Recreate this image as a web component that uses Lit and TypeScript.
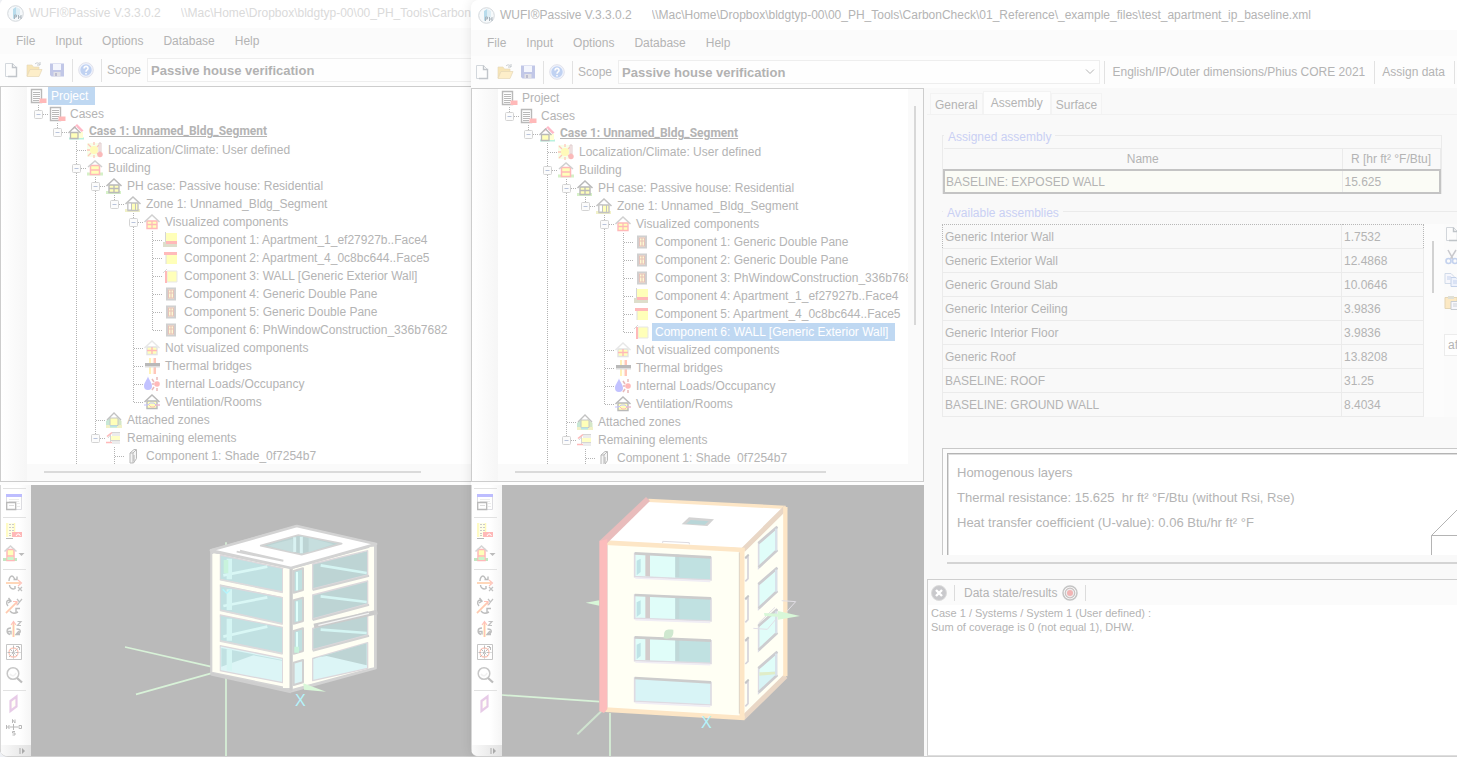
import { LitElement, html, svg, css, nothing } from "lit";
import { customElement, property } from "lit/decorators.js";
import { classMap } from "lit/directives/class-map.js";

type Guide = " " | "|" | "T" | "L";
interface TreeRow {
  guides: string;
  box?: boolean;
  icon: string;
  text: string;
  strong?: boolean;
  selected?: boolean;
}

const house = (stroke: string, roof: string, body: unknown, ground = "") => svg`
  ${ground ? svg`<rect x="0" y="13" width="15" height="3" fill=${ground} />` : nothing}
  <path d="M3 7h10v7.5H3z" fill="#ff0" stroke=${stroke} stroke-width="1.400" />
  <path d="M0.5 8L8 1l7.500 7" fill="none" stroke=${roof} stroke-width="1.5" />
  ${body}`;

const treeIcons: Record<string, unknown> = {
  list: svg`<path d="M1.500 1.500h10v13h-10z" fill="#fff" stroke="#000" stroke-width="1.400" />
    <path d="M3 4.500h7M3 6.500h7M3 8.500h7M3 10.500h7M3 12.500h6" stroke="#000" />
    <rect x="9.500" y="10.500" width="7" height="4.500" fill="#f00" />`,
  cases: svg`<rect x="1" y="13.500" width="15" height="2" fill="#0c8" />
    <path d="M10 8h5v6h-5z" fill="#ff6" />
    <path d="M5 5l4-4 6 6M9 2.500l5 5" fill="none" stroke="#f03" stroke-width="1.300" />
    <path d="M2.500 8.500h7.500v6H2.500z" fill="#ff0" stroke="#000" stroke-width="1.300" />
    <path d="M0.500 9L6.500 3l6 6" fill="none" stroke="#000" stroke-width="1.400" />`,
  climate: svg`<rect x="0" y="1" width="11" height="14" fill="#cf6" opacity="0.500" />
    <circle cx="7" cy="8" r="4" fill="#fe0" />
    <path d="M1 2l3 3M7 0v3M1 14l3-3M7 16v-3M0 8h3M12 3l-2 2M12 13l-2-2" stroke="#f30" stroke-width="1.300" />
    <path d="M12 1h2v9h-2z" fill="#fcc" stroke="#844" /><circle cx="13" cy="12.500" r="2.700" fill="#e00" />`,
  building: svg`<rect x="0" y="12.500" width="16" height="3" fill="#6c3" />
    <path d="M3.500 5.500h9v9h-9z" fill="#ff0" stroke="#f00" stroke-width="1.500" /><path d="M3 10h10" stroke="#f00" stroke-width="1.500" />
    <path d="M1 7l7-6 7 6" fill="none" stroke="#555" stroke-width="1.500" />`,
  ph: house("#000", "#000", svg`<path d="M8 7v7M3 10.500h10" stroke="#000" stroke-width="1.300" />`, "#6c3"),
  zone: house("#222", "#222", svg`<path d="M3 7h3.500v7H3z" fill="#fff" stroke="#222" /><path d="M10.500 7v7" stroke="#222" />`, "#cc3"),
  vis: house("#f00", "#555", svg`<path d="M8 7v7M3 10.500h10" stroke="#f00" stroke-width="1.300" />`),
  notvis: house("#999", "#aaa", svg`<path d="M8 7v7M3 10.500h10" stroke="#f00" stroke-width="1.400" />`),
  floor: svg`<path d="M3 1h11v9H3z" fill="#ff0" /><path d="M2.500 0v10" stroke="#666" />
    <rect x="0" y="10" width="14" height="5" fill="#884" /><rect x="3" y="9" width="11" height="3" fill="#f00" />`,
  roof: svg`<path d="M3 4h11v10H3z" fill="#ff0" /><path d="M3 4v10" stroke="#888" /><rect x="1" y="2" width="13" height="3" fill="#f00" />`,
  wall: svg`<path d="M4 3h10v11H4z" fill="#ff0" stroke="#aaa" /><rect x="2" y="3" width="2" height="12" fill="#f00" /><path d="M0 5l4-4" stroke="#777" />`,
  win: svg`<path d="M4 2.500h8v11H4z" fill="#fd8" stroke="#555" stroke-width="2" />
    <path d="M5.500 4h5v8h-5zM8 4v8M5.500 7h5" fill="#ff6" stroke="#a20" stroke-width="1.200" />`,
  thermal: svg`<rect x="5" y="0" width="2" height="16" fill="#fc0" /><rect x="7.500" y="0" width="1.500" height="16" fill="#ffb" /><rect x="9.500" y="0" width="2.500" height="16" fill="#f30" />
    <rect x="1" y="5" width="15" height="3" fill="#000" /><rect x="1" y="8" width="15" height="1.500" fill="#888" />`,
  loads: svg`<path d="M4 0.500C5 4 8 6.500 8 10a4 4 0 0 1-8 0C0 6.500 3 4 4 0.500z" fill="#22f" />
    <circle cx="13" cy="8" r="2.800" fill="#f00" /><path d="M8 3l2 3M13 1v3M8 14l2-3M13 12v3M8 8h2" stroke="#a00" stroke-width="1.500" />`,
  vent: house("#000", "#000", svg`<path d="M0 11h4l2-2h4l2 2h4" stroke="#22f" fill="none" /><path d="M5 11l2 2h3l2-2h4" stroke="#f00" fill="none" />`),
  attached: svg`<path d="M0 14V9l5-4v9z" fill="#3a6" /><path d="M15.500 14V9l-5-4v9z" fill="#6a3" /><rect x="0" y="13" width="16" height="3" fill="#cc3" />
    <path d="M4 6h8v7.500H4z" fill="#ff0" stroke="#333" /><path d="M1 8l7-7 7 7" fill="none" stroke="#222" stroke-width="1.300" /><rect x="4" y="13.500" width="7" height="2" fill="#0aa" />`,
  remaining: svg`<path d="M6 3h8v3H6zM6 11h8v3H6z" fill="#bbb" /><path d="M5 6h9v5H5z" fill="#ff3" />
    <path d="M6 2.500h8M5 10.500h9M2 8l3-4M4.500 5v8" stroke="#666" fill="none" /><path d="M1 6.500l5-4M0 12.500h6" stroke="#f00" stroke-width="1.600" />`,
  shade: svg`<path d="M5 5l4-3.500h2.500v9L8.500 15H5z" fill="#ddd" stroke="#000" /><path d="M8 5l3-3M5 5h3v10M9 7v6" fill="none" stroke="#000" />`,
};

const toolIcons: Record<string, unknown> = {
  newDoc: svg`<path d="M2.500 1.500h7l4 4v9h-11z" fill="#fff" stroke="#678" /><path d="M9.500 1.500v4h4v9H5" fill="none" stroke="#234" stroke-width="1.400" />`,
  open: svg`<path d="M1 3h5l1.500 2H13v3H4l-3 6z" fill="#e8a800" stroke="#a70" stroke-width="0.600" /><path d="M4 7.500h12l-3 7H1z" fill="#ffc840" stroke="#a70" stroke-width="0.700" />
    <path d="M9 2c2-2 4-1 5 1m0-3v3h-3" fill="none" stroke="#345" />`,
  save: svg`<path d="M1 1.500h14v13H2.500L1 13z" fill="#2338b0" /><path d="M4 2h8v6H4z" fill="#dde4ff" /><path d="M4.500 10h7v4.500h-7z" fill="#99a" /><path d="M6 11h2v3H6z" fill="#115" />`,
  help: svg`<circle cx="8" cy="8" r="7.300" fill="#cdf" stroke="#99b" /><circle cx="8" cy="8" r="5.700" fill="#2060d8" />
    <path d="M6 6.500c0-3 4.200-2.700 4 0C10 8 8 8 8 9.800M8 11v1.400" fill="none" stroke="#fff" stroke-width="1.600" />`,
  cut: svg`<path d="M4 1l5 9M12 1L6.500 10" stroke="#445" stroke-width="1.500" /><circle cx="4.500" cy="12" r="2.500" fill="none" stroke="#36c" stroke-width="1.600" /><circle cx="11" cy="12" r="2.500" fill="none" stroke="#36c" stroke-width="1.600" />`,
  copy: svg`<path d="M1 1.500h6l3 3v7H1z" fill="#eef" stroke="#68b" /><path d="M7 5.500h5l3 3v6H7z" fill="#cdf" stroke="#36b" /><path d="M3 5h4M3 7h3M9 9h4M9 11h4" stroke="#36c" />`,
  paste: svg`<path d="M1 2.500h12v11H1z" fill="#fb3" stroke="#a70" /><path d="M4 1h6v3H4z" fill="#997" /><path d="M7 6.500h8v8H7z" fill="#eef" stroke="#456" /><path d="M9 9h4M9 11h4" stroke="#567" />`,
  layout: svg`<path d="M0.500 1h15v14.500H0.500z" fill="#fff" stroke="#889" /><rect x="0" y="0" width="16" height="3" fill="#11f" />
    <path d="M3 5.500h10M3 7.500h10M11 9.500h3M11 12.500h3" stroke="#bbb" /><path d="M0.700 8.500h9v7h-9z" fill="#fff" stroke="#000" stroke-width="1.300" /><path d="M3 11.500h5" stroke="#888" />`,
  report: svg`<path d="M0 0h9v14H0z" fill="#ffa" /><path d="M1 0v14M8.500 0v9" stroke="#fe0" stroke-width="1.500" /><path d="M3 1.500h5M3 4.500h5M3 7.500h5M3 10.500h3M3 12.500h3" stroke="#444" stroke-dasharray="2 1" />
    <path d="M6 9h10v5H6z" fill="#f00" /><path d="M10 13l1.500-2H13l1.500 2" stroke="#fff" fill="none" /><path d="M0 15.500h7" stroke="#000" />`,
  houseMenu: svg`<path d="M-3 12h14v3H-3z" fill="#2a2" /><path d="M1 3.500h7v11H1z" fill="#ff0" stroke="#f00" stroke-width="1.500" /><path d="M1.500 11h6v3h-6z" fill="#4d4" /><path d="M1 10h7" stroke="#f00" stroke-width="1.500" />
    <path d="M-1.500 5.500L4.500 0l6 5.500" fill="none" stroke="#666" stroke-width="1.600" /><path d="M12.500 7h6l-3 3z" fill="#111" />`,
  rotX: svg`<path d="M3 6c0-3 1.500-5 3-5s2 2 3 3.500M3.500 10c0 3 3 5 5.500 3.500M7.500 4.500H11V1.500M9 11v3" fill="none" stroke="#111" stroke-width="1.400" />
    <path d="M0 8h14" stroke="#fb0" stroke-width="2" /><path d="M0 8h14M12 5l3.500 3-3.500 3" fill="none" stroke="#f20" stroke-width="1.100" /><path d="M12 12l4 4M16 12l-4 4" stroke="#222" stroke-width="1.200" />`,
  rotY: svg`<path d="M2 8C-0.500 5 0.500 1.500 4 2.500M2.500 0l2.500 3-3 2M4 13c2 3 6 2 8 1M10 15v-4.500h4" fill="none" stroke="#111" stroke-width="1.400" />
    <path d="M0 15L11 4" stroke="#fb0" stroke-width="2" /><path d="M0 15L11 4M7 3.500h4v4" fill="none" stroke="#f20" stroke-width="1.100" /><path d="M11 1l2.500 3L16 1M13.500 4l-2 3" fill="none" stroke="#222" stroke-width="1.200" />`,
  rotZ: svg`<path d="M5 7C0 7 0 12 4 13.500M2 10.500h3v3M10.500 8c5 0 5 4 0 5.500M13 10l-3 3.500h4" fill="none" stroke="#111" stroke-width="1.400" />
    <path d="M7.500 2v14" stroke="#fb0" stroke-width="2.400" /><path d="M7.500 1v15M5 4l2.500-3.500L10 4" fill="none" stroke="#f20" stroke-width="1.100" /><path d="M11.500 0.500H15l-3.500 4H15" fill="none" stroke="#222" stroke-width="1.200" />`,
  center: svg`<path d="M0.500 0.500h15v15H0.500z" fill="#fff" stroke="#333" /><circle cx="7.500" cy="8.500" r="4.500" fill="none" stroke="#f30" stroke-width="1.300" />
    <path d="M7.500 1.500v13M1.500 8.500h13M3 13l10-10M10 2.500h3.500V6M4 5l7 7" stroke="#111" stroke-dasharray="3 1" fill="none" />`,
  zoom: svg`<circle cx="7" cy="6.500" r="5.800" fill="#fff" stroke="#333" stroke-width="1.500" /><path d="M4 7c2 3 5 2 6-1" stroke="#ccc" fill="none" stroke-width="1.500" /><path d="M11 11l5 4.500" stroke="#111" stroke-width="2.300" />`,
  plane: svg`<path d="M4.500 5l6-4.500v10L4.500 15z" fill="#ffd" stroke="#a4a" stroke-width="2.200" />`,
  compass: svg`<path d="M7.500 5v6M4 8h8" stroke="#000" /><path d="M6.500 4V0.500L9 4V0.500M0.500 6v4M3 6v4M0.500 8H3M13 6.500h2.500v3H13zM9 12.500H6.500v1.500H9v2H6.500" fill="none" stroke="#000" />`,
};

const toolTitles: Record<string, string> = {
  newDoc: "New", open: "Open", save: "Save", help: "Help", cut: "Cut", copy: "Copy", paste: "Paste",
  layout: "Layout", report: "Report", houseMenu: "Building view", rotX: "Rotate X", rotY: "Rotate Y", rotZ: "Rotate Z",
  center: "Center", zoom: "Zoom", plane: "Section plane", compass: "Compass",
};

const glyph = (set: Record<string, unknown>, name: string) => html`<svg
  class="glyph" viewBox="0 0 16 16" width="16" height="16" aria-hidden="true"><g opacity="0.27">${set[name]}</g></svg>`;

/* Courtyard block with open roof */
const sceneOpen = () => {
  const left = [[168, 208, 278, 238], [260, 296, 373, 330], [348, 385, 462, 422], [440, 478, 550, 512]];
  const right = [[192, 152, 225, 270], [285, 243, 312, 360], [385, 335, 405, 452], [475, 428, 505, 545]];
  const mid = [[210, 275], [298, 368], [390, 458], [485, 552]];
  return svg`<svg viewBox="31 485 440 271" width="440" height="271" role="img" aria-label="3D view of building">
  <g transform="translate(190 500) scale(0.33333)" stroke-linejoin="round">
    <path d="M-195 441L63 500M-162 583L63 520M108 127v641" stroke="#d8f2d8" stroke-width="5" fill="none" />
    <path d="M63 150L320 78l238 54v373L303 575 63 522z" fill="#d3d3d3" stroke="#d3d3d3" stroke-width="5" />
    <path d="M70 160l232 46v358L70 516zM308 206l242-66v362L308 566z" fill="#fffff4" />
    ${left.map(([a, b, c, d], i) => svg`
      <path d="M90 ${a - 3}L278 ${b - 3}V${c - 2}L90 ${d}z" fill=${i === 3 ? "#dcf5f6" : "#c1e1e2"} stroke="#dcd8dc" stroke-width="4" />
      ${i < 3 ? svg`<path d="M100 ${d - 12}L232 ${a + 32}" stroke="#d9f7f5" stroke-width="8" />` : svg`<path d="M94 500l96-34 86 16v-2L94 444z" fill="#c1e1e2" />`}
      <path d="M110 ${a + 8}h16V${d}h-16z" fill="#d5f5f3" />
      ${i < 3 ? svg`<path d="M88 ${d + 18}L278 ${c + 17}" stroke="#d3d3d3" stroke-width="7" /><path d="M88 ${d + 1}L278 ${c}" stroke="#dcdcdc" stroke-width="4" />` : nothing}`)}
    ${right.map(([a, b, c, d], i) => svg`
      <path d="M368 ${a}L533 ${b}V${c}L368 ${d - 3}z" fill=${i === 3 ? "#dcf5f6" : "#bdd4d4"} stroke="#dcd8dc" stroke-width="4" />
      ${i < 3 ? svg`<path d="M392 ${a + 4}L530 ${c - 6}" stroke="#d5f5f3" stroke-width="8" />` : svg`<path d="M370 476l160-46v66l-120-28-40 6z" fill="#bdd4d4" />`}
      ${i < 3 ? svg`<path d="M368 ${d}L538 ${c + 2}" stroke="#d3d3d3" stroke-width="6" />` : nothing}`)}
    ${mid.map(([a, b], i) => svg`
      <path d="M311 ${a + 3}L339 ${a - 5}V${b - 5}L311 ${b + 3}z" fill=${i === 3 ? "#dcf5f6" : "#bfe0e0"} stroke="#d0d0d0" stroke-width="6" />
      ${i < 3 ? svg`<path d="M321 ${a + 6}V${b - 4}" stroke="#e0fffb" stroke-width="6" />` : nothing}`)}
    <path d="M290 206v358M355 198v352M78 162v354" stroke="#fffff4" stroke-width="22" />
    <path d="M303 204v368" stroke="#cbcbcb" stroke-width="9" />
    <path d="M545 140v362" stroke="#fffff4" stroke-width="14" />
    <path d="M63 151L320 78l238 54-255 72z" fill="#fff" stroke="#d3d3d3" stroke-width="8" />
    <path d="M212 137l113-32 130 26-120 33z" fill="#bcd3d3" stroke="#d3d3d3" stroke-width="5" />
    <path d="M232 137l76-20 2 40zM356 113v44l74-24z" fill="#c6dede" /><path d="M314 112v44M334 110v50" stroke="#d9f2f2" stroke-width="9" />
    <path d="M140 155l140 28M150 152l130 30" stroke="#d3d3d3" stroke-width="5" />
    <path d="M372 378l190-42" stroke="#cbcbcb" stroke-width="14" /><path d="M385 376l152-36" stroke="#f4f4f4" stroke-width="4" />
    <path d="M108 180v40M320 440v18" stroke="#c8f3dc" stroke-width="14" />
    <path d="M98 268l12 12 10-10" stroke="#b4f4fc" stroke-width="4" fill="none" />
    <path d="M63 522l240 53" stroke="#cfcfcf" stroke-width="9" />
    <path d="M340 550l68 25-66-6z" fill="#d8f7d8" />
  </g>
  <text x="295" y="706" class="axis">X</text></svg>`;
};

/* Closed block with selected wall */
const sceneClosed = () => {
  const front = [[203, 215], [328, 338], [455, 465], [577, 590]];
  const side = [125, 248, 373, 500];
  return svg`<svg viewBox="502 485 421 271" width="421" height="271" role="img" aria-label="3D view of building">
  <g transform="translate(470 485) scale(0.33333)">
    <path d="M96 630l292 20M420 684v131" stroke="#d8f2d8" stroke-width="5" fill="none" />
    <path d="M322 748l78-75" stroke="#cfe3cf" stroke-width="6" /><path d="M347 353l41-7v16z" fill="#d8f7d8" />
    <path d="M412 175l398 20v500l-398-25zM820 195L947 70v505L820 700z" fill="#fffff4" />
    <path d="M535 45l410 23-125 122-408-20z" fill="#fff" />
    <path d="M535 46l412 21" stroke="#fde6c6" stroke-width="10" />
    <path d="M820 194L947 68M820 698l127-124" stroke="#e9d7c6" stroke-width="15" />
    <path d="M946 66v508" stroke="#fde6c6" stroke-width="13" />
    <path d="M406 173l418 22M406 674l418 25" stroke="#fde6c6" stroke-width="14" />
    <path d="M816 190v514" stroke="#fde6c6" stroke-width="15" /><path d="M808 202v484" stroke="#ddd3c4" stroke-width="3" />
    <path d="M388 168L528 36l12 12-128 126z" fill="#e9bcbc" />
    <path d="M388 168l24-6v510l-10 12-14-6z" fill="#fcbcbc" />
    <path d="M635 118l22-21 75 6-20 20z" fill="#d3d3d3" /><path d="M648 116l14-11 54 4-12 10z" fill="#b9d6d8" />
    <path d="M578 174v-5l80 4v5" stroke="#dedbe0" stroke-width="3" fill="none" />
    ${front.map(([l, r], i) => svg`
      <path d="M494 ${l}L723 ${r}v70L494 ${l + 72}z" fill="#d8f4f6" />
      ${i < 3 ? svg`<path d="M494 ${l}l34 2v72l-34-1zM540 ${l + 2}l76 4v70l-76-4z" fill="#e0fdf9" />
        <path d="M616 ${l + 6}L723 ${r}v70l-107-4z" fill="#c0e1e1" /><path d="M616 ${l + 6}h12v68h-12z" fill="#c0d8d8" />
        <path d="M500 ${l + 24}l12-6v40l-12 10z" fill="#bfe3e6" /><path d="M526 ${l + 4}h14v68l-14-1z" fill="#d3cccc" />` : nothing}
      <path d="M494 ${l}v72L723 ${r + 70}V${r}" fill="none" stroke="#dedbe2" stroke-width="5" />
      <path d="M494 ${l + 2}L723 ${r + 2}" stroke="#cccccc" stroke-width="8" />
      <path d="M496 ${l + 76}L721 ${r + 74}" stroke="#f0edf4" stroke-width="5" />`)}
    ${side.map((y, i) => svg`
      <path d="M866 ${y + 50}L920 ${y + 4}v66l-54 54z" fill="#e0fdf9" stroke="#dcdce4" stroke-width="5" />
      ${i === 3 ? svg`<path d="M868 ${y + 64}l50-6v10l-50 50z" fill="#d8f4f6" /><path d="M868 ${y + 62}l48-2v8l-48 4z" fill="#e0edc8" />` : nothing}
      <path d="M865 ${y + 50}L922 ${y}M866 ${y + 122}L922 ${y + 70}" stroke="#cdcdd0" stroke-width="8" />
      <path d="M918 ${y + 6}v66" stroke="#d8e2ea" stroke-width="6" />
      <path d="M826 ${y + 96}l8-8v68l-8 8" fill="none" stroke="#d6d3da" stroke-width="5" /><path d="M826 ${y + 94}l10-10" stroke="#c6c6c6" stroke-width="6" />`)}
    <path d="M582 452c0-22 14-18 28-18 2 22-8 30-30 26z" fill="#cfe8cf" />
    <path d="M935 347l42 3-27 30M850 430l42 3 28-33M865 415l50-48" stroke="#e2dfe6" stroke-width="3" fill="none" />
    <path d="M882 384l42 2v-8l66 15-66 11v-9l-40-2z" fill="#d8f7d8" />
  </g>
  <text x="701" y="728" class="axis">X</text></svg>`;
};

const BASE_TREE: TreeRow[] = [
  { guides: "", icon: "list", text: "Project" },
  { guides: "L", box: true, icon: "list", text: "Cases" },
  { guides: " L", box: true, icon: "cases", text: "Case 1: Unnamed_Bldg_Segment", strong: true },
  { guides: "  T", icon: "climate", text: "Localization/Climate: User defined" },
  { guides: "  T", box: true, icon: "building", text: "Building" },
  { guides: "  |T", box: true, icon: "ph", text: "PH case: Passive house: Residential" },
  { guides: "  ||L", box: true, icon: "zone", text: "Zone 1: Unnamed_Bldg_Segment" },
  { guides: "  || T", box: true, icon: "vis", text: "Visualized components" },
];
const TAIL_TREE: TreeRow[] = [
  { guides: "  || T", icon: "notvis", text: "Not visualized components" },
  { guides: "  || T", icon: "thermal", text: "Thermal bridges" },
  { guides: "  || T", icon: "loads", text: "Internal Loads/Occupancy" },
  { guides: "  || L", icon: "vent", text: "Ventilation/Rooms" },
  { guides: "  |T", icon: "attached", text: "Attached zones" },
  { guides: "  |L", box: true, icon: "remaining", text: "Remaining elements" },
  { guides: "  | T", icon: "shade", text: "Component 1: Shade_0f7254b7" },
];
const components = (items: [string, string][], selected = -1): TreeRow[] =>
  items.map(([icon, text], i) => ({
    guides: "  || |" + (i === items.length - 1 ? "L" : "T"),
    icon,
    text: `Component ${i + 1}: ${text}`,
    selected: i === selected,
  })).map((r) => ({ ...r, guides: r.guides.replace(" |L", " L").replace(" |T", " T").replace(/^( {2}\|\|) ([LT])$/, "$1| $2") }))
    .map((r) => ({ ...r, guides: r.guides.replace("||| ", "|| |") }));

const TREE_A: TreeRow[] = [
  { ...BASE_TREE[0], selected: true },
  ...BASE_TREE.slice(1),
  ...components([
    ["floor", "Apartment_1_ef27927b..Face4"],
    ["roof", "Apartment_4_0c8bc644..Face5"],
    ["wall", "WALL [Generic Exterior Wall]"],
    ["win", "Generic Double Pane"],
    ["win", "Generic Double Pane"],
    ["win", "PhWindowConstruction_336b7682"],
  ]),
  ...TAIL_TREE,
];
const TREE_B: TreeRow[] = [
  ...BASE_TREE,
  ...components([
    ["win", "Generic Double Pane"],
    ["win", "Generic Double Pane"],
    ["win", "PhWindowConstruction_336b7682"],
    ["floor", "Apartment_1_ef27927b..Face4"],
    ["roof", "Apartment_4_0c8bc644..Face5"],
    ["wall", "WALL [Generic Exterior Wall]"],
  ], 5),
  ...TAIL_TREE,
];

const shared = css`
  * { box-sizing: border-box; }
  svg { display: block; flex: none; }
  .glyph { overflow: visible; }
  button, select {
    font: inherit; color: inherit; background: none; border: 0; padding: 0; margin: 0; text-align: left; border-radius: 0;
  }
`;

@customElement("project-tree")
export class ProjectTree extends LitElement {
  @property({ attribute: false }) rows: TreeRow[] = [];

  static styles = [shared, css`
    :host { display: block; padding-left: 2px; }
    .row { display: flex; height: 18px; align-items: stretch; white-space: nowrap; }
    .icon { width: 19px; flex: none; padding: 1px 0 0 1px; }
    .label { padding: 0 7px 0 3px; line-height: 18px; }
    .selected .label { background: #bfd8f2; color: #fff; }
    .strong .label { font-family: Roboto, "Liberation Sans", sans-serif; font-weight: 700; line-height: 16px; text-decoration: underline; }
  `];

  private cell(g: Guide, box: boolean) {
    const lines: Record<Guide, string> = { " ": "", "|": "M9.500 0v18", T: "M9.500 0v18M10 9.500h9", L: "M9.500 0v9.500h9.500" };
    return html`<svg width="19" height="18" viewBox="0 0 19 18" aria-hidden="true">
      <path d=${lines[g]} fill="none" stroke="#b4b4b4" stroke-dasharray="1 1" />
      ${box ? svg`<rect x="5.500" y="5.500" width="8" height="8" rx="1" fill="#fcfcfc" stroke="#d4d4d4" /><path d="M7.500 9.500h4" stroke="#b9c4dc" />` : nothing}
    </svg>`;
  }

  render() {
    return html`<div role="tree">${this.rows.map((r) => html`
      <div role="treeitem" class=${classMap({ row: true, selected: !!r.selected, strong: !!r.strong })}>
        ${[...r.guides].map((g, i) => this.cell(g as Guide, !!r.box && i === r.guides.length - 1))}
        <span class="icon">${glyph(treeIcons, r.icon)}</span><span class="label">${r.text}</span>
      </div>`)}</div>`;
  }
}

@customElement("assembly-pane")
export class AssemblyPane extends LitElement {
  static styles = [shared, css`
    :host { display: flex; flex-direction: column; min-width: 0; flex: 1; padding-left: 3px; overflow: hidden; background: #f9f9f9; }
    .tabs { display: flex; height: 26px; padding: 3px 0 0 3px; align-items: flex-end; flex: none; }
    .tab { height: 21px; padding: 2px 4px 0; border: 1px solid #f3f3f3; border-bottom: 0; background: #fafafa; }
    .tab.on { height: 23px; padding: 0 7px 0; background: #fdfdfd; }
    .page { flex: 1; min-height: 0; display: flex; flex-direction: column; border-top: 1px solid #f2f2f2; padding: 8px 0 3px 15px; }
    fieldset { border: 1px solid #ebebeb; margin: 0; padding: 0; min-width: 0; }
    .assigned { margin-right: 15px; border-bottom: 0; }
    .available { border-right: 0; border-bottom: 0; margin-top: 5px; border-left: 0; }
    legend { color: #c9d0f4; line-height: 21px; padding: 4px 4px 0; margin-left: 1px; }
    table { width: 100%; border-collapse: collapse; table-layout: fixed; }
    th { font-weight: 400; height: 21px; padding: 1px 0 0; border: 1px solid #ebebeb; border-left: 0; }
    td { height: 24px; padding: 1px 2px 0; border: 1px solid #ebebeb; }
    .r { width: 98px; }
    .r2 { width: 82px; }
    .current td { height: 23px; background: #fbfcf6; border-top: 2px solid #c4c4c4; border-bottom: 2px solid #c4c4c4; }
    .current td:first-child { border-left: 2px solid #c4c4c4; padding-left: 1px; }
    .current td:last-child { border-right: 2px solid #c4c4c4; }
    .focus td { border-top: 1px dotted #b8b8b8; border-bottom: 1px dotted #b8b8b8; }
    .focus td:first-child { border-left: 1px dotted #b8b8b8; }
    .focus td:last-child { border-right: 1px dotted #b8b8b8; }
    .split { display: flex; }
    .list { flex: 1; min-width: 0; }
    .rail { width: 20px; flex: none; padding: 17px 0 0 8px; background: #fcfcfc; }
    .thumb { width: 2px; height: 52px; background: #d2d2d2; }
    .side { width: 13px; flex: none; overflow: hidden; padding-top: 2px; display: flex; flex-direction: column; gap: 7px; background: #fbfbfb; }
    .side button { width: 16px; }
    .side .after { width: 60px; height: 22px; margin-top: 16px; padding-left: 3px; background: #fefefe; border: 1px solid #ececec; }
    .info { flex: 1; min-height: 0; margin-top: 31px; border: 1px solid #c9c9c9; border-width: 1px 0 0 1px; padding: 4px 0 0 4px; background: #fcfcfc; }
    .sheet { height: 100%; background: #fff; border: 1px solid #b4b4b4; border-width: 1px 0 0 1px; box-shadow: inset 1px 1px #dedede; padding: 6px 0 0 9px; display: flex; justify-content: space-between; overflow: hidden; white-space: pre; line-height: 25px; font-size: 13px; }
    .sheet p { margin: 0; }
    .sheet svg { align-self: flex-end; }
    .hbar { height: 16px; flex: none; padding: 7px 0 0 5px; }
    .hbar div { height: 2px; background: #d4d4d4; }
    .out { flex: 0 0 177px; margin-top: 5px; background: #fff; border: 1px solid #cfcfcf; border-right: 0; border-bottom-color: #dedede; }
    .outbar { height: 25px; background: #fbfbfb; display: flex; align-items: center; padding-left: 3px; }
    .sep { width: 1px; height: 16px; background: #dcdcdc; margin: 0 9px 0 7px; }
    .name { margin-right: 5px; }
    .out p { margin: 1px 3px; font-size: 11px; line-height: 14px; }
  `];

  private rows = [
    ["Generic Interior Wall", "1.7532"], ["Generic Exterior Wall", "12.4868"], ["Generic Ground Slab", "10.0646"],
    ["Generic Interior Ceiling", "3.9836"], ["Generic Interior Floor", "3.9836"], ["Generic Roof", "13.8208"],
    ["BASELINE: ROOF", "31.25"], ["BASELINE: GROUND WALL", "8.4034"],
  ];

  render() {
    return html`
      <div class="tabs" role="tablist">
        <button class="tab" role="tab">General</button><button class="tab on" role="tab" aria-selected="true">Assembly</button><button class="tab" role="tab">Surface</button>
      </div>
      <div class="page">
        <fieldset class="assigned"><legend>Assigned assembly</legend>
          <table><thead><tr><th>Name</th><th class="r">R [hr ft² °F/Btu]</th></tr></thead>
            <tbody><tr class="current"><td>BASELINE: EXPOSED WALL</td><td>15.625</td></tr></tbody></table>
        </fieldset>
        <fieldset class="available"><legend>Available assemblies</legend>
          <div class="split">
            <div class="list"><table><colgroup><col /><col class="r2" /></colgroup><tbody>
              ${this.rows.map(([n, r], i) => html`<tr class=${i ? "" : "focus"}><td>${n}</td><td>${r}</td></tr>`)}
            </tbody></table></div>
            <div class="rail"><div class="thumb"></div></div>
            <div class="side">
              ${["newDoc", "cut", "copy", "paste"].map((n) => html`<button title=${toolTitles[n]}>${glyph(toolIcons, n)}</button>`)}
              <button class="after">after</button>
            </div>
          </div>
        </fieldset>
        <div class="info"><div class="sheet">
          <div><p>Homogenous layers</p><p>Thermal resistance: 15.625  hr ft² °F/Btu (without Rsi, Rse)</p><p>Heat transfer coefficient (U-value): 0.06 Btu/hr ft² °F</p></div>
          <svg width="26" height="45" viewBox="0 0 26 45" aria-hidden="true"><path d="M0.500 45V25.500H26M0.500 25.500L26 0" fill="none" stroke="#b4b4b4" /></svg>
        </div></div>
        <div class="hbar"><div></div></div>
      </div>
      <section class="out">
        <div class="outbar">
          <button title="Close"><svg width="16" height="16" viewBox="0 0 16 16"><circle cx="8" cy="8" r="7.500" fill="#c9c9cc" stroke="#dcdcdc" /><path d="M5 5l6 6M11 5l-6 6" stroke="#fff" stroke-width="2.400" /></svg></button>
          <span class="sep"></span><span class="name">Data state/results</span>
          <svg width="16" height="16" viewBox="0 0 16 16"><circle cx="8" cy="8" r="7" fill="none" stroke="#c4c4c4" stroke-width="1.500" /><circle cx="8" cy="8" r="4.800" fill="#eee" stroke="#c8c0c0" stroke-width="1.200" /><circle cx="8" cy="8" r="3" fill="#f2b4b4" /></svg>
          <span class="sep"></span>
        </div>
        <p>Case 1 / Systems / System 1 (User defined) :<br />Sum of coverage is 0 (not equal 1), DHW.</p>
      </section>`;
  }
}

@customElement("app-window")
export class AppWindow extends LitElement {
  @property({ type: Boolean, reflect: true }) active = false;
  @property() path = "";

  static styles = [shared, css`
    :host { display: flex; flex-direction: column; background: #fdfdfd; overflow: hidden; border-bottom: 1px solid #d0d0d0; border-radius: 8px 0 0 8px; }
    .title { height: 30px; flex: none; display: flex; align-items: center; padding: 0 9px 0 7px; background: #fff; white-space: pre; font-size: 12px; color: #dadada; }
    :host([active]) .title { color: #b4b4b4; }
    .title span { margin-left: 5px; }
    .title .path { margin-left: 20px; overflow: hidden; min-width: 0; }
    .menu { height: 26px; flex: none; display: flex; align-items: center; gap: 20px; padding-left: 16px; background: #fbfbfb; }
    .bar { height: 32px; flex: none; display: flex; align-items: center; padding-left: 3px; white-space: nowrap; }
    .bar .tools { display: flex; gap: 7px; }
    .sep { width: 1px; height: 23px; background: #e2e2e2; flex: none; }
    .before { margin-left: 7px; }
    .after { margin-right: 2px; }
    .help { margin: 0 7px 0 5px; }
    label { margin: 0 6px 0 5px; }
    .combo { display: grid; flex: 1; min-width: 0; align-items: center; height: 24px; border: 1px solid #eeeeee; background: #fefefe; margin-right: 4px; }
    :host(:not([active])) .combo { flex: 0 0 420px; }
    .combo select { grid-area: 1 / 1; appearance: none; width: 100%; padding-left: 3px; font-size: 13px; font-weight: 700; color: #b2b2b2; }
    .combo svg { grid-area: 1 / 1; justify-self: end; margin-right: 4px; pointer-events: none; }
    .note { padding: 0 9px 0 7px; }
    .body { flex: 1; min-height: 0; display: flex; }
    .left { flex: 1; min-width: 0; display: flex; flex-direction: column; gap: 3px; }
    :host([active]) .left { flex: 0 0 453px; }
    .tree { flex: 1; min-height: 0; display: grid; grid-template: minmax(0, 1fr) 17px / 26px minmax(0, 1fr); border: 1px solid #cdcdcd; background: #fff; }
    :host([active]) .tree { grid-template-columns: 26px minmax(0, 1fr) 15px; }
    .gutter { grid-row: 1 / 3; background: linear-gradient(90deg, #ffffff, #f6f6f6); }
    project-tree { overflow: hidden; }
    .vbar { background: #fafafa; padding: 17px 0 0 6px; }
    .vbar div { width: 2px; height: 219px; background: #d8d8d8; }
    .hbar { grid-column: 2 / -1; background: #fafafa; padding: 7px 0 0 17px; }
    .hbar div { height: 2px; width: 377px; background: #dadada; }
    :host([active]) .hbar div { width: 311px; }
    .view { flex: 0 0 271px; display: flex; background: #bababa; overflow: hidden; }
    .strip { width: 31px; flex: none; display: flex; flex-direction: column; background: linear-gradient(90deg, #ffffff 60%, #f5f5f5); border-left: 1px solid #d8d8d8; }
    .strip button { height: 23px; padding: 0 0 1px 5px; }
    .rule { height: 1px; margin: 3px 5px 2px 2px; background: #e2e2e2; flex: none; }
    .grip { margin-top: auto; height: 11px; background: linear-gradient(90deg, #fafafa, #e2e2e2); display: flex; justify-content: flex-end; align-items: center; padding-right: 5px; }
    .axis { font: 16px "Liberation Sans", Arial, sans-serif; fill: #b4f4fc; }
  `];

  private strip() {
    const groups = [["layout"], ["report", "houseMenu"], ["rotX", "rotY", "rotZ", "center", "zoom"], this.active ? ["plane"] : ["plane", "compass"]];
    return html`<div class="strip" role="toolbar">
      ${groups.map((g) => html`<div class="rule"></div>${g.map((n) => html`<button title=${toolTitles[n]}>${glyph(toolIcons, n)}</button>`)}`)}
      <div class="grip"><svg width="7" height="6" viewBox="0 0 7 6"><path d="M1 0v6" stroke="#aaa" /><path d="M3 0v6l3-3z" fill="#aaa" /></svg></div>
    </div>`;
  }

  render() {
    return html`
      <header class="title">
        <svg width="17" height="17" viewBox="0 0 17 17" aria-hidden="true"><circle cx="8.500" cy="8.500" r="7.800" fill="#f6f9fb" stroke="#d4d8dc" />
          <path d="M6 4l3-2v10l-3 2z" fill="#b8dcec" /><path d="M9 2l4 2v6l-4 2z" fill="#dfeef5" />
          <path d="M7.500 14v-4h2v2h-2M11.500 10v4M11.500 12h2.500M14 10v4" fill="none" stroke="#aab4bc" /></svg>
        <span>WUFI®Passive V.3.3.0.2</span><span class="path">${this.path}</span>
      </header>
      <nav class="menu">${["File", "Input", "Options", "Database", "Help"].map((m) => html`<button>${m}</button>`)}</nav>
      <div class="bar">
        <div class="tools">${["newDoc", "open", "save"].map((n) => html`<button title=${toolTitles[n]}>${glyph(toolIcons, n)}</button>`)}</div>
        <span class="sep before"></span>
        <button class="help" title="Help">${glyph(toolIcons, "help")}</button>
        <span class="sep"></span>
        <label for="scope">Scope</label>
        <div class="combo"><select id="scope"><option>Passive house verification</option></select>
          <svg width="10" height="6" viewBox="0 0 10 6"><path d="M1 0.500l4 4 4-4" fill="none" stroke="#b4b4b4" /></svg></div>
        ${this.active ? html`<span class="sep"></span><span class="note">English/IP/Outer dimensions/Phius CORE 2021</span><span class="sep"></span><button class="note">Assign data</button><span class="sep after"></span>` : nothing}
      </div>
      <div class="body">
        <div class="left">
          <div class="tree">
            <div class="gutter"></div>
            <project-tree .rows=${this.active ? TREE_B : TREE_A}></project-tree>
            ${this.active ? html`<div class="vbar"><div></div></div>` : nothing}
            <div class="hbar"><div></div></div>
          </div>
          <div class="view">${this.strip()}${this.active ? sceneClosed() : sceneOpen()}</div>
        </div>
        ${this.active ? html`<assembly-pane></assembly-pane>` : nothing}
      </div>`;
  }
}

@customElement("app-root")
export class AppRoot extends LitElement {
  static styles = css`
    :host { display: block; position: relative; height: 100vh; min-height: 700px; overflow: hidden; background: #eef0f4; font: 12px "Liberation Sans", Arial, sans-serif; color: #b4b4b4; }
    app-window { position: absolute; bottom: 0; }
    .back { left: 0; top: -2px; width: 480px; }
    .front { left: 471px; right: 0; top: 0; box-shadow: 0 0 12px rgba(0, 0, 0, 0.1); }
  `;
  render() {
    return html`
      <app-window class="back" path="\\\\Mac\\Home\\Dropbox\\bldgtyp-00\\00_PH_Tools\\CarbonCheck"></app-window>
      <app-window class="front" active path="\\\\Mac\\Home\\Dropbox\\bldgtyp-00\\00_PH_Tools\\CarbonCheck\\01_Reference\\_example_files\\test_apartment_ip_baseline.xml"></app-window>`;
  }
}
